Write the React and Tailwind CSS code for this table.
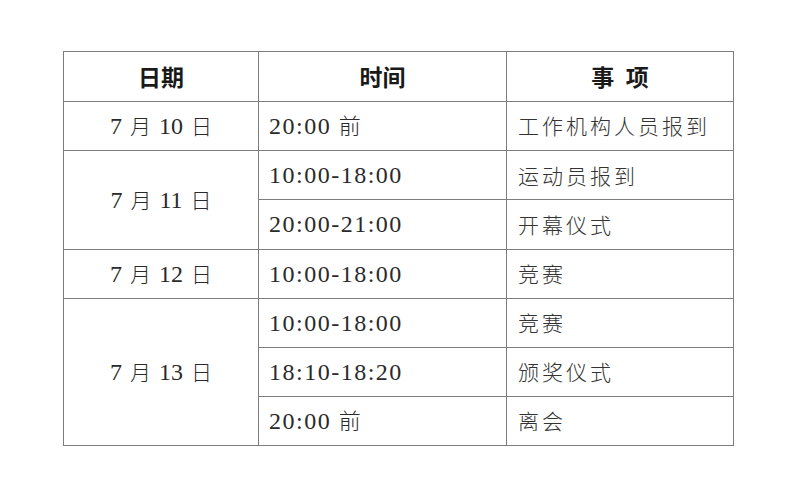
import React from 'react'

const SERIF = { fontFamily: "'Liberation Serif', 'Noto Sans CJK SC', serif" }

const rows = [
  { date: ['7', '10'], span: 1, time: '20:00', before: true, item: '工作机构人员报到' },
  { date: ['7', '11'], span: 2, time: '10:00-18:00', item: '运动员报到' },
  { date: null, time: '20:00-21:00', item: '开幕仪式' },
  { date: ['7', '12'], span: 1, time: '10:00-18:00', item: '竞赛' },
  { date: ['7', '13'], span: 3, time: '10:00-18:00', item: '竞赛' },
  { date: null, time: '18:10-18:20', item: '颁奖仪式' },
  { date: null, time: '20:00', before: true, item: '离会' },
]

export default function App() {
  return (
    <div className="w-[800px] h-[493px] bg-white pt-[51px] pl-[63px]">
      <table className="border-collapse table-fixed w-[670px]">
        <colgroup>
          <col className="w-[195px]" />
          <col className="w-[248px]" />
          <col className="w-[227px]" />
        </colgroup>
        <thead>
          <tr className="h-[50px]">
            {['日期', '时间', '事\u2002项'].map((h) => (
              <th
                key={h}
                className="border border-[#7d7d7d] p-0 text-center align-middle text-[23px] font-bold text-[#1a1a1a] whitespace-pre"
                style={{ fontFamily: "'Noto Sans CJK SC', sans-serif" }}
              >
                {h}
              </th>
            ))}
          </tr>
        </thead>
        <tbody>
          {rows.map((r, i) => (
            <tr key={i} className="h-[49.2px]">
              {r.date && (
                <td
                  rowSpan={r.span}
                  className="border border-[#7d7d7d] p-0 text-center align-middle text-[24px] text-[#2a2a2a] [word-spacing:2px]"
                  style={SERIF}
                >
                  {r.date[0]} <span className="text-[21px] font-light">月</span> {r.date[1]}{' '}
                  <span className="text-[21px] font-light">日</span>
                </td>
              )}
              <td
                className="border border-[#7d7d7d] pl-[10px] py-0 align-middle text-[24px] tracking-[1.5px] text-[#2a2a2a]"
                style={SERIF}
              >
                {r.time}
                {r.before && (
                  <>
                    {' '}
                    <span className="text-[22px] font-light tracking-normal">前</span>
                  </>
                )}
              </td>
              <td
                className="border border-[#7d7d7d] pl-[11px] py-0 align-middle text-[21px] tracking-[3px] font-light text-[#333]"
                style={{ fontFamily: "'Noto Sans CJK SC', sans-serif" }}
              >
                {r.item}
              </td>
            </tr>
          ))}
        </tbody>
      </table>
    </div>
  )
}
